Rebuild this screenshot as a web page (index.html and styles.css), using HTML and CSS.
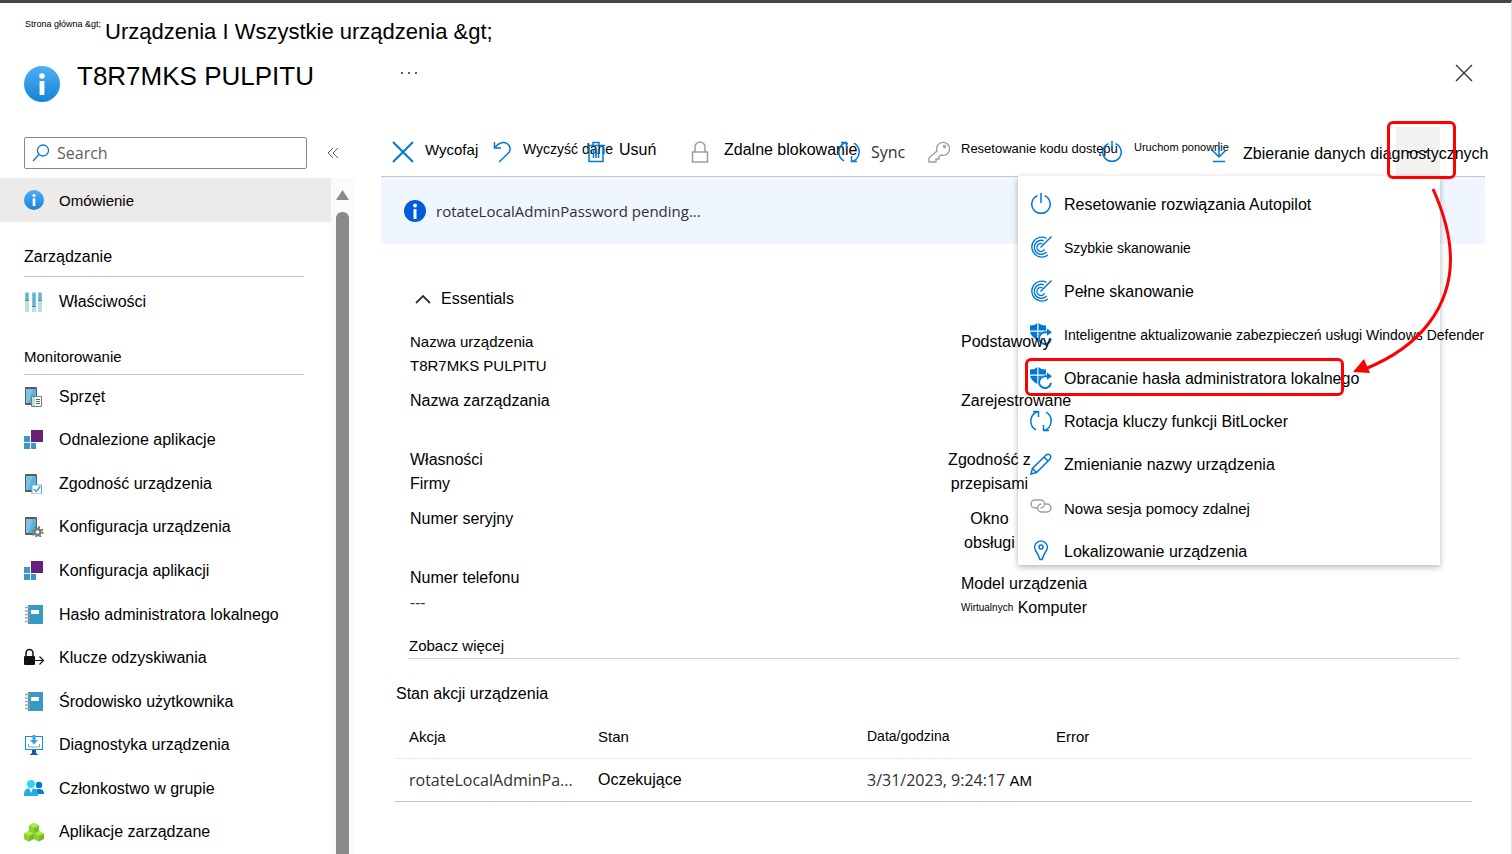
FILE: index.html
```html
<!DOCTYPE html>
<html lang="pl">
<head>
    <meta charset="UTF-8">
    <meta name="viewport" content="width=device-width, initial-scale=1.0">
    <title>T8R7MKS PULPITU</title>
    <link rel="stylesheet" href="styles.css">
</head>
<body>
    <!-- shared icons -->
    <svg class="sprite" aria-hidden="true">
        <defs>
            <linearGradient id="infoFill" x1="0" y1="0" x2="0" y2="1">
                <stop offset="0" stop-color="#50aef3"/>
                <stop offset="1" stop-color="#1484da"/>
            </linearGradient>
        </defs>
        <symbol id="info" viewBox="0 0 36 36">
            <circle cx="18" cy="18" r="18" fill="url(#infoFill)"/>
            <circle cx="18" cy="10" r="2.8" fill="#fff"/>
            <rect x="15.6" y="15" width="4.8" height="14" fill="#fff"/>
        </symbol>
        <symbol id="phone" viewBox="0 0 20 20">
            <rect x="1" y="0" width="12" height="18" rx="1" fill="#5a5a5a"/>
            <rect x="2" y="2" width="10" height="14" fill="#59b4d9"/>
            <path d="M2 2h7L4 16H2z" fill="#7cc4e1"/>
        </symbol>
        <symbol id="apps" viewBox="0 0 20 20">
            <rect x="7" y="0" width="12" height="12" fill="#68217a"/>
            <path d="M0 6h6v6H0zM0 13h6v6H0zM7 13h5v6H7z" fill="#3999c6"/>
        </symbol>
        <symbol id="book" viewBox="0 0 20 20">
            <rect x="4" y="0" width="15" height="19" fill="#3999c6"/>
            <rect x="7" y="5" width="8" height="4" fill="#fff"/>
            <path d="M1 2.500h5M1 6h5M1 9.500h5M1 13h5M1 16.500h5" stroke="#a0a1a2" stroke-width="1.500"/>
        </symbol>
        <symbol id="sync" viewBox="0 0 22 22">
            <path d="M8 1.500A10 10 0 0 0 6 19.800M14 20.500A10 10 0 0 0 16 2.200M3 1.500h5.500V7M19 20.500h-5.500V15" fill="none" stroke="#0078d4" stroke-width="1.500"/>
        </symbol>
        <symbol id="power" viewBox="0 0 22 22">
            <path d="M11 0v10M7.500 2.600a9.200 9.200 0 1 0 7 0" fill="none" stroke="#0078d4" stroke-width="1.500"/>
        </symbol>
        <symbol id="scan" viewBox="0 0 22 22">
            <g fill="none" stroke="#0078d4" stroke-width="1.400">
                <path d="M16.500 2.300A10 10 0 1 0 18 19"/>
                <path d="M13.800 4.800A7 7 0 1 0 16.500 16"/>
                <path d="M12.500 7.800A4 4 0 1 0 14.500 13.300"/>
                <path d="M10.500 11.500L21.500 .500"/>
            </g>
        </symbol>
        <symbol id="shield" viewBox="0 0 22 22">
            <path d="M0 2.500Q5 2.500 7.300 0V7.500H0zM8.500 0Q11 2.500 16 2.500V7.500H8.500zM0 8.800h7.300V17Q1 14 0 8.800zM8.500 8.800H12Q9 10.500 8.500 14z" fill="#0078d4"/>
            <path d="M18 9.300h-2.500a5.900 5.900 0 1 0 5.400 6.500" fill="none" stroke="#0078d4" stroke-width="1.900"/>
            <path d="M17 5.500l5 3.800-5 3.500z" fill="#0078d4"/>
        </symbol>
    </svg>

    <div class="page">
        <header class="header">
            <nav class="breadcrumb" aria-label="Breadcrumb">
                <a class="crumb-small" href="#">Strona główna &amp;gt;</a>
                <a class="crumb-large" href="#">Urządzenia I Wszystkie urządzenia &amp;gt;</a>
            </nav>
            <div class="title-row">
                <svg class="title-icon"><use href="#info"/></svg>
                <h1>T8R7MKS PULPITU</h1>
                <button class="plain" aria-label="Więcej">
                    <svg width="16" height="4" fill="#605e5c"><path d="M0 1h2v2H0zM7 1h2v2H7zM14 1h2v2h-2z"/></svg>
                </button>
                <button class="plain close" aria-label="Zamknij">
                    <svg width="18" height="18" stroke="#323130" stroke-width="1.300"><path d="M1 1l16 16M17 1L1 17"/></svg>
                </button>
            </div>
        </header>

        <div class="body">
            <aside class="sidebar">
                <div class="search-row">
                    <label class="search">
                        <svg width="18" height="18" fill="none" stroke="#0078d4" stroke-width="1.300"><circle cx="11" cy="6.500" r="5.500"/><path d="M7 10.500L1 17"/></svg>
                        <input type="text" placeholder="Search" aria-label="Search">
                    </label>
                    <button class="plain" aria-label="Zwiń">
                        <svg width="12" height="12" fill="none" stroke="#605e5c" stroke-width="1"><path d="M6 1L1 6l5 5M11 1L6 6l5 5"/></svg>
                    </button>
                </div>
                <div class="nav-area">
                    <nav class="nav">
                        <a class="nav-item active" href="#"><svg class="nav-icon"><use href="#info"/></svg>Omówienie</a>
                        <h2>Zarządzanie</h2>
                        <div class="nav-single">
                            <a class="nav-item" href="#">
                                <svg class="nav-icon" viewBox="0 0 20 20">
                                    <path d="M1 0h4v20H1zM8 0h4v20H8zM14 0h4v20h-4z" fill="#b8dcea"/>
                                    <path d="M1.500 1h3v7h-3zM8.500 1h3v13h-3zM14.500 1h3v7h-3z" fill="#59b4d9"/>
                                    <path d="M1 8h4v1H1zM8 14h4v1H8zM14 8h4v1h-4z" fill="#7a7a7a"/>
                                </svg>
                                Właściwości
                            </a>
                        </div>
                        <h2 class="small">Monitorowanie</h2>
                        <div class="nav-list">
                            <a class="nav-item" href="#">
                                <svg class="nav-icon" viewBox="0 0 20 20">
                                    <use href="#phone" width="20" height="20"/>
                                    <path d="M7.500 9.500h10v10h-10z" fill="#fff" stroke="#7a7a7a"/>
                                    <path d="M8 10h3v9H8z" fill="#b8dcea"/>
                                    <path d="M12 12.500h4M12 14.500h4M12 16.500h4" stroke="#5a5a5a"/>
                                </svg>
                                Sprzęt
                            </a>
                            <a class="nav-item" href="#"><svg class="nav-icon"><use href="#apps"/></svg>Odnalezione aplikacje</a>
                            <a class="nav-item" href="#">
                                <svg class="nav-icon" viewBox="0 0 20 20">
                                    <use href="#phone" width="20" height="20"/>
                                    <path d="M8 11h9.500v9H8z" fill="#fff" stroke="#59b4d9"/>
                                    <path d="M10 15l2.300 2.500 4-5" fill="none" stroke="#3999c6" stroke-width="1.400"/>
                                </svg>
                                Zgodność urządzenia
                            </a>
                            <a class="nav-item" href="#">
                                <svg class="nav-icon" viewBox="0 0 20 20">
                                    <use href="#phone" width="20" height="20"/>
                                    <circle cx="13.500" cy="15" r="5" fill="none" stroke="#7a7a7a" stroke-width="2" stroke-dasharray="2 1.930"/>
                                    <circle cx="13.500" cy="15" r="3" fill="#fff" stroke="#7a7a7a" stroke-width="2.400"/>
                                </svg>
                                Konfiguracja urządzenia
                            </a>
                            <a class="nav-item" href="#"><svg class="nav-icon"><use href="#apps"/></svg>Konfiguracja aplikacji</a>
                            <a class="nav-item" href="#"><svg class="nav-icon"><use href="#book"/></svg>Hasło administratora lokalnego</a>
                            <a class="nav-item" href="#">
                                <svg class="nav-icon" viewBox="0 0 20 20">
                                    <rect x="0" y="8" width="11" height="9" rx="1" fill="#111"/>
                                    <path d="M2 8V5a3.500 3.500 0 0 1 7 0v3" fill="none" stroke="#111" stroke-width="1.500"/>
                                    <path d="M11 12.500h8M15.500 8.500l4 4-4 4" fill="none" stroke="#111" stroke-width="1.200"/>
                                </svg>
                                Klucze odzyskiwania
                            </a>
                            <a class="nav-item" href="#"><svg class="nav-icon"><use href="#book"/></svg>Środowisko użytkownika</a>
                            <a class="nav-item" href="#">
                                <svg class="nav-icon" viewBox="0 0 20 20">
                                    <rect x="1.500" y="1.500" width="17" height="13" fill="#fff" stroke="#1490df"/>
                                    <path d="M8.500 0h3v5H14l-4 4.500L6 5h2.500z" fill="#32a3ea"/>
                                    <path d="M4.500 9v3h11V9" fill="none" stroke="#a0a1a2"/>
                                    <path d="M8 15h4v3l2.500 2h-9L8 18z" fill="#1b57a6"/>
                                </svg>
                                Diagnostyka urządzenia
                            </a>
                            <a class="nav-item" href="#">
                                <svg class="nav-icon" viewBox="0 0 20 20">
                                    <circle cx="15" cy="6" r="3.200" fill="#0078d4"/>
                                    <path d="M10 15q0-5 5-5t5 5z" fill="#0078d4"/>
                                    <circle cx="7" cy="5" r="4" fill="#32d4f5"/>
                                    <path d="M0 17V15Q0 9 7 9t7 6v2z" fill="#22aee4"/>
                                    <path d="M5 9l2 5 2-5z" fill="#fff"/>
                                </svg>
                                Członkostwo w grupie
                            </a>
                            <a class="nav-item" href="#">
                                <svg class="nav-icon" viewBox="0 0 20 20">
                                    <path d="M10 1l5 2.500V9l-5 2.500L5 9V3.500zM5 9l5 2.500V17l-5 2.500L0 17v-5.500zM15 9l5 2.500V17l-5 2.500-5-2.500v-5.500z" fill="#76bc2d"/>
                                    <path d="M10 1l5 2.500L10 6 5 3.500zM5 9l5 2.500L5 14l-5-2.500zM15 9l5 2.500-5 2.500-5-2.500z" fill="#b4ec36"/>
                                    <path d="M5 3.500L10 6v5.500L5 9zM0 11.500L5 14v5.500L0 17zM10 11.500l5 2.500v5.500L10 17z" fill="#86d633"/>
                                </svg>
                                Aplikacje zarządzane
                            </a>
                        </div>
                    </nav>
                    <div class="scrollbar">
                        <svg width="13" height="10" fill="#8a8a8a"><path d="M6.500 0L13 10H0z"/></svg>
                        <div class="thumb"></div>
                    </div>
                </div>
            </aside>

            <main class="main">
                <div class="toolbar">
                    <button class="s15"><svg class="icon" fill="none" stroke="#0078d4" stroke-width="2"><path d="M1 1l20 20M21 1L1 21"/></svg>Wycofaj</button>
                    <button class="s14"><svg class="icon" fill="none" stroke="#0078d4" stroke-width="1.500"><path d="M1.500 1v6H8M2 6.500C6 1 11 .500 14 2.500c4 3 4 7 1 10L6 21"/></svg>Wyczyść dane</button>
                    <button class="s16"><svg class="icon" fill="none" stroke="#0078d4" stroke-width="1.500"><path d="M1 4.500h18M3 4.500v16h14v-16M7 4V1.500h6V4M7.500 8v9M10 8v9M12.500 8v9"/></svg>Usuń</button>
                    <button class="s16"><svg class="icon" fill="none" stroke="#a19f9d" stroke-width="1.500"><path d="M1.500 11h15v10h-15zM4 11V6a5 5 0 0 1 10 0v5"/></svg>Zdalne blokowanie</button>
                    <button class="segoe"><svg class="icon"><use href="#sync"/></svg>Sync</button>
                    <button class="s13"><svg class="icon" fill="none" stroke="#a19f9d" stroke-width="1.400"><path d="M9 10a6.500 6.500 0 1 1 4 4l-2 1.500v2.500H8v3H1v-4z"/><circle cx="16.500" cy="5.500" r="1"/></svg>Resetowanie kodu dostępu</button>
                    <button class="s11"><svg class="icon"><use href="#power"/></svg>Uruchom ponownie</button>
                    <button class="s16 tall"><svg class="icon" fill="none" stroke="#0078d4" stroke-width="1.500"><path d="M9 1v15M2.500 9.500L9 16l6.500-6.500M3 20.500h12"/></svg>Zbieranie danych diagnostycznych</button>
                    <button class="more" aria-label="Więcej akcji">
                        <svg width="22" height="4" fill="#323130"><path d="M1 1h3v2H1zM9 1h3v2H9zM17 1h3v2h-3z"/></svg>
                    </button>
                </div>

                <div class="banner">
                    <svg width="22" height="22" viewBox="0 0 22 22"><circle cx="11" cy="11" r="11" fill="#015cda"/><circle cx="11" cy="5.500" r="2" fill="#fff"/><path d="M9.500 9h3v10h-3z" fill="#fff"/></svg>
                    rotateLocalAdminPassword pending...
                </div>

                <section class="essentials">
                    <button class="essentials-toggle">
                        <svg width="16" height="10" fill="none" stroke="#323130" stroke-width="1.800"><path d="M1 9l7-7 7 7"/></svg>
                        Essentials
                    </button>
                    <div class="columns">
                        <dl>
                            <div class="s15"><dt>Nazwa urządzenia</dt><dd>T8R7MKS PULPITU</dd></div>
                            <div><dt>Nazwa zarządzania</dt></div>
                            <div><dt>Własności</dt><dd>Firmy</dd></div>
                            <div><dt>Numer seryjny</dt></div>
                            <div><dt>Numer telefonu</dt><dd class="segoe">---</dd></div>
                        </dl>
                        <dl class="right">
                            <div><dt>Podstawowy</dt></div>
                            <div><dt>Zarejestrowane</dt></div>
                            <div class="wrapped"><dt>Zgodność z przepisami</dt></div>
                            <div class="wrapped"><dt>Okno obsługi</dt></div>
                            <div class="model"><dt>Model urządzenia</dt><dd><small>Wirtualnych</small> Komputer</dd></div>
                        </dl>
                    </div>
                    <a class="see-more" href="#">Zobacz więcej</a>
                </section>

                <section class="actions">
                    <h2>Stan akcji urządzenia</h2>
                    <table>
                        <thead>
                            <tr><th>Akcja</th><th>Stan</th><th class="s14">Data/godzina</th><th>Error</th></tr>
                        </thead>
                        <tbody>
                            <tr><td class="segoe">rotateLocalAdminPa...</td><td>Oczekujące</td><td class="segoe">3/31/2023, 9:24:17 <span class="s15">AM</span></td><td></td></tr>
                        </tbody>
                    </table>
                </section>

                <!-- overflow menu opened from the "more" button -->
                <div class="menu">
                    <button class="s16"><svg class="icon"><use href="#power"/></svg>Resetowanie rozwiązania Autopilot</button>
                    <button class="s14"><svg class="icon"><use href="#scan"/></svg>Szybkie skanowanie</button>
                    <button class="s16"><svg class="icon"><use href="#scan"/></svg>Pełne skanowanie</button>
                    <button class="s14"><svg class="icon"><use href="#shield"/></svg>Inteligentne aktualizowanie zabezpieczeń usługi Windows Defender</button>
                    <button class="s16"><svg class="icon"><use href="#shield"/></svg>Obracanie hasła administratora lokalnego</button>
                    <button class="s16"><svg class="icon"><use href="#sync"/></svg>Rotacja kluczy funkcji BitLocker</button>
                    <button class="s16"><svg class="icon" fill="none" stroke="#0078d4" stroke-width="1.500"><path d="M1 21l1.500-5.500L16 2q2.500-1.500 4 0t0 4L6.500 19.500zM2.500 15.500l4 4M14 4l4 4"/></svg>Zmienianie nazwy urządzenia</button>
                    <button class="s15"><svg class="icon" fill="none" stroke="#a19f9d" stroke-width="1.500"><path d="M7 11H5a4 4 0 0 1 0-8h5.500a4 4 0 0 1 0 8M15 7h2a4 4 0 0 1 0 8h-5.500a4 4 0 0 1 0-8"/></svg>Nowa sesja pomocy zdalnej</button>
                    <button class="s16"><svg class="icon" fill="none" stroke="#0078d4" stroke-width="1.500"><path d="M10 19.500Q8 14 5.600 10.500A6.300 6.300 0 1 1 16.400 10.500Q14 14 12 19.500z"/><circle cx="11" cy="7" r="2"/></svg>Lokalizowanie urządzenia</button>
                    <div class="frame frame-item"></div>
                </div>

                <div class="frame frame-more"></div>
                <svg class="arrow" width="100" height="190">
                    <path d="M82 1C104 50 108 95 78 135Q56 164 14 181" fill="none" stroke="#f00" stroke-width="3"/>
                    <path d="M2 184L13 171L19 185z" fill="#f00"/>
                </svg>
            </main>
        </div>
    </div>
</body>
</html>
```
FILE: styles.css
```css
*{
    box-sizing: border-box;
}
body{
    margin: 0;
    background-color: #fff;
    color: #000;
    font-family: "Liberation Sans", Arial, sans-serif;
    font-size: 16px;
}
a{
    color: inherit;
    text-decoration: none;
}
button{
    border: 0;
    padding: 0;
    background: none;
    color: inherit;
    font-family: inherit;
    font-size: 16px;
}
svg{
    flex: none;
    display: block;
}
h1,h2,dl,dd{
    margin: 0;
    font-weight: normal;
}
.sprite{
    position: absolute;
    width: 0;
    height: 0;
}
.s11{
    font-size: 11px;
}
.s13{
    font-size: 13px;
}
.s14{
    font-size: 14px;
}
.s15{
    font-size: 15px;
}
.s16{
    font-size: 16px;
}
.segoe{
    font-family: "Open Sans", sans-serif;
    font-size: 16px;
    color: #323130;
}
.page{
    display: flex;
    flex-direction: column;
    min-height: 100vh;
    border-top: 3px solid #484644;
    border-right: 1px solid #e1dfdd;
}

/* header */
.header{
    padding: 15px 32px 0 25px;
}
.breadcrumb{
    display: flex;
    align-items: flex-start;
    gap: 4px;
}
.crumb-small{
    font-size: 9px;
    line-height: 13px;
}
.crumb-large{
    font-size: 22px;
    line-height: 28px;
}
.title-row{
    display: flex;
    align-items: flex-start;
    height: 44px;
    margin: 12px 0 0 -1px;
}
.title-icon{
    width: 36px;
    height: 36px;
    align-self: flex-end;
}
.title-row h1{
    width: 317px;
    margin-left: 17px;
    font-size: 26px;
    line-height: 36px;
}
.plain{
    display: flex;
    align-items: center;
    justify-content: center;
    width: 30px;
    height: 30px;
}
.close{
    margin-left: auto;
}

/* sidebar */
.body{
    display: flex;
    flex: 1;
}
.sidebar{
    display: flex;
    flex-direction: column;
    flex: none;
    width: 354px;
    padding-top: 35px;
}
.search-row{
    display: flex;
    align-items: center;
    gap: 11px;
    padding-left: 24px;
    margin-bottom: 9px;
}
.search{
    display: flex;
    align-items: center;
    gap: 7px;
    width: 283px;
    height: 32px;
    padding: 0 7px;
    border: 1px solid #8a8886;
    border-radius: 2px;
}
.search input{
    flex: 1;
    min-width: 0;
    border: 0;
    padding: 0;
    outline: none;
    font-family: "Open Sans", sans-serif;
    font-size: 16px;
}
.search input::placeholder{
    color: #605e5c;
}
.nav-area{
    display: flex;
    flex: 1;
}
.nav{
    display: flex;
    flex-direction: column;
    flex: 1;
}
.nav-item{
    display: flex;
    align-items: center;
    gap: 15px;
    height: 44px;
    padding-left: 24px;
}
.nav-icon{
    width: 20px;
    height: 20px;
}
.nav-item.active{
    background-color: #edebe9;
    font-size: 15px;
}
.nav h2{
    margin: 20px 27px 0 24px;
    padding-bottom: 4px;
    border-bottom: 1px solid #c8c6c4;
    font-size: 16px;
    line-height: 30px;
}
.nav h2.small{
    font-size: 15px;
    line-height: 26px;
}
.nav-single{
    padding-top: 3px;
}
.nav-list{
    display: flex;
    flex-direction: column;
    flex: 1;
}
.nav-list .nav-item{
    flex: 1;
    height: auto;
    min-height: 40px;
}
.scrollbar{
    display: flex;
    flex-direction: column;
    align-items: center;
    gap: 12px;
    width: 23px;
    padding-top: 12px;
    background-color: #fbfbfb;
}
.thumb{
    flex: 1;
    width: 13px;
    border-radius: 6px 6px 0 0;
    background-color: #8a8a8a;
}

/* main */
.main{
    position: relative;
    flex: 1;
    min-width: 0;
    margin: 20px 26px 0 27px;
}
.toolbar{
    display: grid;
    grid-template-columns: 101px 93px 105px 147px 90px 173px 109px 1fr 44px;
    height: 55px;
    padding: 5px 45px 0 11px;
    border-bottom: 1px solid #c8c6c4;
    isolation: isolate;
}
.toolbar button{
    position: relative;
    z-index: 1;
    display: flex;
    align-items: flex-start;
    gap: 11px;
    min-width: 0;
    padding-top: 14px;
    white-space: nowrap;
}
.toolbar .s14{
    gap: 8px;
}
.toolbar .tall{
    line-height: 26px;
}
.toolbar .more{
    z-index: 0;
    align-items: center;
    justify-content: center;
    padding: 0;
    background-color: #f3f2f1;
}
.icon{
    width: 22px;
    height: 22px;
}
.banner{
    display: flex;
    align-items: center;
    gap: 10px;
    height: 67px;
    padding-left: 23px;
    background-color: #eff6ff;
    color: #323130;
    font-family: "Open Sans", sans-serif;
    font-size: 15px;
}
.essentials{
    margin: 43px 26px 0 27px;
    border-bottom: 1px solid #d2d0ce;
    line-height: 24px;
}
.essentials-toggle{
    display: flex;
    align-items: center;
    gap: 10px;
    padding-left: 7px;
    line-height: 24px;
}
.columns{
    display: grid;
    grid-template-columns: 20fr 19fr;
    margin-top: 19px;
}
.columns dl{
    display: flex;
    flex-direction: column;
    gap: 11px;
}
.columns dl > div{
    height: 48px;
    padding-left: 2px;
}
.columns .right{
    position: relative;
    z-index: 2;
}
.columns .right > div{
    padding-left: 14px;
}
.columns .right .wrapped{
    width: 85px;
    padding-left: 0;
    text-align: center;
}
.right .model{
    margin-top: 6px;
}
.right small{
    font-size: 10px;
    vertical-align: 2px;
}
.see-more{
    display: block;
    margin-top: 14px;
    padding-left: 1px;
    font-size: 15px;
}
.actions{
    margin: 23px 13px 0 14px;
}
.actions h2{
    padding-left: 1px;
    font-size: 16px;
    line-height: 24px;
}
table{
    width: 100%;
    margin-top: 9px;
    border-collapse: collapse;
    table-layout: fixed;
}
th,td{
    height: 43px;
    padding: 0;
    text-align: left;
    white-space: nowrap;
}
th{
    border-bottom: 1px solid #edebe9;
    font-weight: normal;
    font-size: 15px;
}
th.s14{
    font-size: 14px;
}
td{
    border-bottom: 1px solid #c8c6c4;
}
td .s15{
    color: #000;
    font-family: "Liberation Sans", Arial, sans-serif;
}
th:first-child,td:first-child{
    width: 203px;
    padding-left: 14px;
}
th:nth-child(2){
    width: 269px;
}
th:nth-child(3){
    width: 189px;
}

/* menu */
.menu{
    position: absolute;
    top: 54px;
    right: 45px;
    z-index: 1;
    display: flex;
    flex-direction: column;
    justify-content: space-between;
    width: 422px;
    min-height: 389px;
    padding: 17px 12px 3px;
    background-color: #fff;
    box-shadow: 0 2px 6px rgba(0, 0, 0, 0.3);
}
.menu button{
    display: flex;
    align-items: flex-start;
    gap: 12px;
    height: 22px;
    line-height: 24px;
    white-space: nowrap;
}

/* red marks */
.frame{
    position: absolute;
    border: 3px solid #f00;
    border-radius: 6px;
    pointer-events: none;
}
.frame-item{
    top: 182px;
    left: 7px;
    width: 319px;
    height: 38px;
}
.frame-more{
    top: -1px;
    right: 29px;
    z-index: 3;
    width: 69px;
    height: 58px;
}
.arrow{
    position: absolute;
    top: 66px;
    right: 34px;
    z-index: 3;
    overflow: visible;
    pointer-events: none;
}
```
